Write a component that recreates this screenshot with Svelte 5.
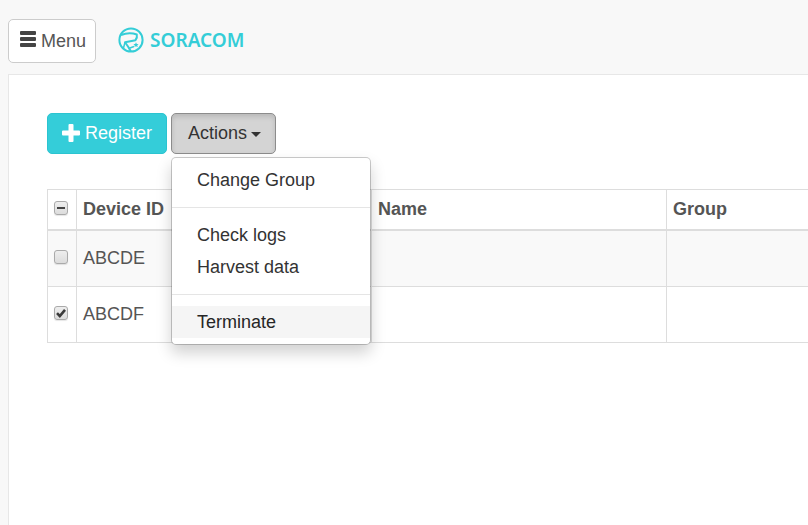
<script>
  let devices = $state([
    { id: 'ABCDE', name: '', group: '', selected: false },
    { id: 'ABCDF', name: '', group: '', selected: true }
  ]);
  const sections = [['Change Group'], ['Check logs', 'Harvest data'], ['Terminate']];
  let active = $state('Terminate');
  let open = $state(true);

  const count = $derived(devices.filter((d) => d.selected).length);
  const all = $derived(count === devices.length);
  const some = $derived(count > 0 && !all);

  function toggleAll() {
    const next = !all;
    devices.forEach((d) => (d.selected = next));
  }
</script>

<div class="page">
  <header>
    <button class="btn menu-btn" type="button">
      <svg width="16" height="16" viewBox="0 0 16 16" aria-hidden="true">
        <path d="M1 0h14q1 0 1 1v2q0 1-1 1H1Q0 4 0 3V1q0-1 1-1zM1 6h14q1 0 1 1v2q0 1-1 1H1q-1 0-1-1V7q0-1 1-1zM1 12h14q1 0 1 1v2q0 1-1 1H1q-1 0-1-1v-2q0-1 1-1z" fill="#444" />
      </svg>
      Menu
    </button>
    <a class="logo" href="#home">
      <svg width="26" height="26" viewBox="0 0 26 26" fill="none" stroke="#34cdd7" aria-hidden="true">
        <circle cx="13" cy="13" r="11.6" stroke-width="2" />
        <path d="M3 8Q11 5 18.800 7.500Q19.500 10.500 17.500 13.200L7 15.200L10 19.500L13 24.500" stroke-width="2" stroke-linejoin="round" />
        <path d="M7 15.200L5.500 21M10.500 21.500L16 19.500" stroke-width="1.500" />
        <path d="M18 15.300l.8 1.600 1.800.2-1.300 1.200.4 1.800-1.700-.9-1.600.9.3-1.800-1.300-1.200 1.800-.2z" fill="#34cdd7" stroke="none" />
      </svg>
      <span>SORACOM</span>
    </a>
  </header>

  <main>
    <div class="toolbar">
      <button class="btn primary" type="button">
        <svg width="18" height="18" viewBox="0 0 18 18" aria-hidden="true">
          <path d="M7.500 0h3q1 0 1 1v5.500H17q1 0 1 1v3q0 1-1 1h-5.500V17q0 1-1 1h-3q-1 0-1-1v-5.500H1q-1 0-1-1v-3q0-1 1-1h5.500V1q0-1 1-1z" fill="#fff" />
        </svg>
        Register
      </button>
      <div class="dropdown">
        <button class="btn actions" type="button" aria-expanded={open} onclick={() => (open = !open)}>
          Actions <span class="caret"></span>
        </button>
        {#if open}
          <div class="menu" role="menu">
            {#each sections as items, i}
              {#if i > 0}<hr />{/if}
              {#each items as item}
                <button type="button" role="menuitem" class:active={active === item} onmouseenter={() => (active = item)}>{item}</button>
              {/each}
            {/each}
          </div>
        {/if}
      </div>
    </div>

    <table>
      <colgroup>
        <col class="c-check" /><col class="c-data" /><col class="c-data" /><col />
      </colgroup>
      <thead>
        <tr>
          <th class="pick">
            <label class="check">
              <input type="checkbox" aria-label="Select all" checked={all} indeterminate={some} onchange={toggleAll} />
              {#if some}
                <svg viewBox="0 0 14 14" aria-hidden="true"><path d="M3 7h8" stroke="#444" stroke-width="2" /></svg>
              {/if}
            </label>
          </th>
          <th>Device ID</th>
          <th>Name</th>
          <th>Group</th>
        </tr>
      </thead>
      <tbody>
        {#each devices as device}
          <tr>
            <td class="pick">
              <label class="check">
                <input type="checkbox" aria-label={'Select ' + device.id} bind:checked={device.selected} />
                {#if device.selected}
                  <svg viewBox="0 0 14 14" aria-hidden="true"><path d="M3 7.200L5.800 10L11 3.800" fill="none" stroke="#3a3a3a" stroke-width="2.600" /></svg>
                {/if}
              </label>
            </td>
            <td>{device.id}</td>
            <td>{device.name}</td>
            <td>{device.group}</td>
          </tr>
        {/each}
      </tbody>
    </table>
  </main>
</div>

<style>
  :global(body) {
    margin: 0;
    background: #f8f8f8;
  }
  .page {
    box-sizing: border-box;
    min-height: 100vh;
    display: flex;
    flex-direction: column;
    padding-left: 8px;
    overflow: hidden;
    background: #f8f8f8;
    color: #555;
    font: 18px/24px "Liberation Sans", Arial, sans-serif;
  }
  header {
    display: flex;
    align-items: center;
    gap: 22px;
    padding: 19px 0 11px;
  }
  .btn {
    box-sizing: border-box;
    display: flex;
    align-items: center;
    border: 1px solid #ccc;
    border-radius: 5px;
    background: #fff;
    color: #333;
    font: inherit;
    cursor: pointer;
  }
  .menu-btn {
    height: 44px;
    padding: 0 9px 0 11px;
    gap: 5px;
    color: #555;
  }
  .menu-btn svg {
    margin-bottom: 4px;
  }
  .logo {
    display: flex;
    align-items: center;
    gap: 6px;
    padding-bottom: 2px;
    color: #34cdd7;
    font: 600 19px/24px "Noto Sans", sans-serif;
    text-decoration: none;
  }
  main {
    flex: 1;
    padding: 38px 0 0 38px;
    border: solid #e7e7e7;
    border-width: 1px 0 0 1px;
    background: #fff;
  }
  .toolbar {
    display: flex;
    gap: 4px;
    margin-bottom: 35px;
  }
  .toolbar .btn {
    height: 41px;
    padding: 0 14px 2px 16px;
    gap: 4px;
  }
  .toolbar .primary {
    padding: 0 14px 2px;
    gap: 5px;
    border-color: #2bc4d0;
    background: #34cdd9;
    color: #fff;
  }
  .dropdown {
    position: relative;
  }
  .actions {
    border-color: #8c8c8c;
    background: #d4d4d4;
    box-shadow: inset 0 3px 5px rgba(0, 0, 0, 0.125);
  }
  .caret {
    margin-top: 4px;
    border: 5px solid transparent;
    border-top-color: #333;
    border-bottom: 0;
  }
  .menu {
    position: absolute;
    top: 100%;
    left: 0;
    z-index: 1;
    box-sizing: border-box;
    width: 200px;
    margin-top: 3px;
    padding: 6px 0;
    border: 1px solid rgba(0, 0, 0, 0.2);
    border-radius: 5px;
    background: #fff;
    background-clip: padding-box;
    box-shadow: 0 8px 15px rgba(0, 0, 0, 0.18);
  }
  .menu button {
    display: block;
    width: 100%;
    padding: 4px 25px;
    border: 0;
    background: none;
    color: #333;
    font: inherit;
    text-align: left;
    cursor: pointer;
  }
  .menu button.active {
    background: #f5f5f5;
    color: #262626;
  }
  hr {
    height: 1px;
    margin: 11px 0;
    border: 0;
    background: #e5e5e5;
  }
  table {
    width: 100%;
    table-layout: fixed;
    border-collapse: separate;
    border-spacing: 0;
  }
  .c-check {
    width: 29px;
  }
  .c-data {
    width: 295px;
  }
  th,
  td {
    box-sizing: border-box;
    height: 56px;
    padding: 0 6px 2px;
    border: solid #ddd;
    border-width: 0 0 1px 1px;
    text-align: left;
    vertical-align: middle;
  }
  th {
    height: 42px;
    border-width: 1px 0 2px 1px;
  }
  tbody tr:nth-child(odd) {
    background: #f9f9f9;
  }
  .check {
    display: grid;
    width: 14px;
    height: 14px;
  }
  .check > * {
    grid-area: 1 / 1;
    width: 14px;
    height: 14px;
  }
  .check svg {
    pointer-events: none;
  }
  input {
    box-sizing: border-box;
    margin: 0;
    appearance: none;
    border: 1px solid #aaa;
    border-radius: 3px;
    background: linear-gradient(#eee, #dcdcdc);
    box-shadow: 0 1px 1px rgba(0, 0, 0, 0.1);
  }
  th.pick,
  td.pick {
    padding: 0 0 3px 6px;
  }
</style>
